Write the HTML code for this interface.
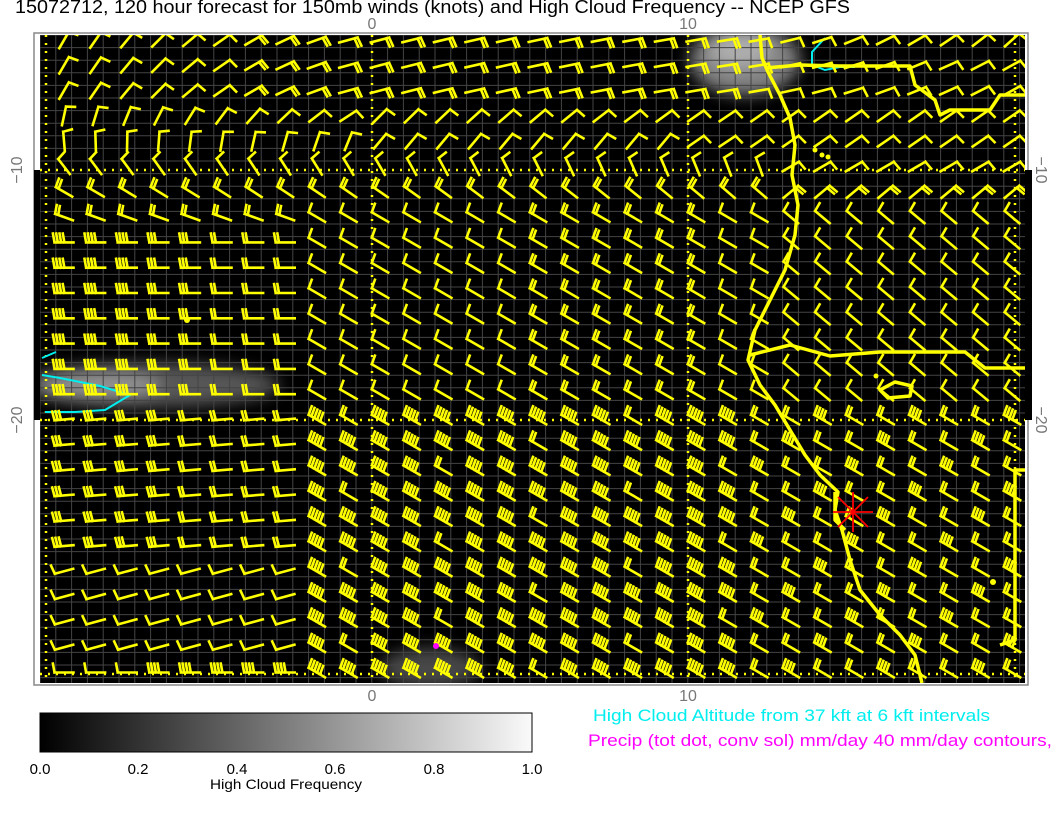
<!DOCTYPE html>
<html><head><meta charset="utf-8"><style>
body{margin:0;width:1056px;height:816px;background:#fff;overflow:hidden;font-family:"Liberation Sans",sans-serif;}
svg{position:absolute;left:0;top:0}
</style></head><body>
<svg id="s" width="1056" height="816" xmlns="http://www.w3.org/2000/svg">
<defs>
<linearGradient id="cb" x1="0" x2="1"><stop offset="0" stop-color="#000"/><stop offset="1" stop-color="#fafafa"/></linearGradient>
<filter id="bl"><feGaussianBlur stdDeviation="8"/></filter>
<clipPath id="pc"><rect x="40" y="35" width="985" height="648"/></clipPath>
</defs>
<text x="15" y="13" font-size="18" fill="#000" textLength="835" lengthAdjust="spacingAndGlyphs">15072712, 120 hour forecast for 150mb winds (knots) and High Cloud Frequency -- NCEP GFS</text>
<text x="372" y="29" font-size="16" fill="#777" text-anchor="middle">0</text>
<text x="688" y="29" font-size="16" fill="#777" text-anchor="middle">10</text>
<text x="372" y="701" font-size="16" fill="#777" text-anchor="middle">0</text>
<text x="688" y="701" font-size="16" fill="#777" text-anchor="middle">10</text>
<text font-size="16" fill="#777" transform="translate(22,170) rotate(-90)" text-anchor="middle">−10</text>
<text font-size="16" fill="#777" transform="translate(22,420) rotate(-90)" text-anchor="middle">−20</text>
<text font-size="16" fill="#777" transform="translate(1036,170) rotate(90)" text-anchor="middle">−10</text>
<text font-size="16" fill="#777" transform="translate(1036,420) rotate(90)" text-anchor="middle">−20</text>
<rect x="34" y="33" width="994" height="652" fill="#fff" stroke="#888" stroke-width="1.5"/>
<rect x="34" y="170" width="6" height="250" fill="#000"/>
<rect x="1025" y="170" width="7" height="250" fill="#000"/>
<rect x="40" y="35" width="985" height="648" fill="#000"/>
<g clip-path="url(#pc)">
<g filter="url(#bl)" opacity="0.85">
<ellipse cx="745" cy="60" rx="55" ry="35" fill="#999"/>
<ellipse cx="740" cy="50" rx="30" ry="18" fill="#ccc"/>
<ellipse cx="150" cy="385" rx="130" ry="22" fill="#666"/>
<ellipse cx="100" cy="385" rx="60" ry="14" fill="#aaa"/>
<ellipse cx="430" cy="668" rx="50" ry="20" fill="#555"/>
</g>
<g id="grid" stroke="#444" stroke-width="1"></g>
<g stroke="#ff0" stroke-width="2.5" stroke-dasharray="2,6">
<line x1="46" y1="35" x2="46" y2="683"/><line x1="372" y1="35" x2="372" y2="683"/><line x1="688" y1="35" x2="688" y2="683"/><line x1="1015" y1="35" x2="1015" y2="683"/>
<line x1="40" y1="170" x2="1025" y2="170"/><line x1="40" y1="420" x2="1025" y2="420"/><line x1="40" y1="674" x2="1025" y2="674"/>
</g>
<g fill="none" stroke="#0ee" stroke-width="2">
<path d="M825 38 L812 52 L812 65 L825 70 L840 67 L855 67"/>
<path d="M42 358 L56 352 M42 375 L60 378 L100 386 L130 395 L105 410 L75 412 L45 412"/>
</g>
<g id="barbs" stroke="#ff0" stroke-width="2.6" fill="none" stroke-linecap="square"></g>
<g fill="none" stroke="#ff0" stroke-width="3.5" stroke-linejoin="round">
<path d="M760 35 L762 58 L768 72 L780 95 L790 118 L795 145 L792 175 L798 205 L795 235 L785 270 L770 300 L755 330 L748 360 L760 385 L775 405 L790 430 L805 455 L820 475 L838 492 L835 510 L842 530 L850 560 L860 590 L880 615 L900 635 L915 655 L922 683"/>
<path d="M765 68 L800 65 L840 66 L910 66 L915 85 L935 100 L940 115 L950 110 L990 110 L1000 95 L1025 95"/>
<path d="M750 355 L790 345 L830 356 L880 352 L965 352 L985 368 L1025 368"/>
<path d="M1025 470 L1015 470 L1015 640 L1000 645"/>
<path d="M880 390 L895 382 L912 386 L910 396 L888 398 Z"/>
<path d="M835 492 L835 520 L845 530"/>
</g>
<g fill="#ff0"><circle cx="815" cy="150" r="2.5"/><circle cx="822" cy="155" r="2.5"/><circle cx="828" cy="157" r="2.5"/><circle cx="187" cy="320" r="3"/><circle cx="993" cy="582" r="3"/><circle cx="876" cy="376" r="2.5"/></g>
<g stroke="#f00" stroke-width="1.8"><line x1="838" y1="497" x2="868" y2="527"/><line x1="838" y1="527" x2="868" y2="497"/><line x1="853" y1="492" x2="853" y2="532"/><line x1="833" y1="512" x2="873" y2="512"/></g>
<circle cx="436" cy="646" r="3" fill="#f0f"/>
</g>
<rect x="40" y="713" width="492" height="39" fill="url(#cb)" stroke="#000"/>
<g font-size="15" fill="#000" text-anchor="middle">
<text x="40" y="774">0.0</text><text x="138" y="774">0.2</text><text x="237" y="774">0.4</text><text x="335" y="774">0.6</text><text x="434" y="774">0.8</text><text x="532" y="774">1.0</text>
<text x="286" y="789" font-size="14" textLength="152" lengthAdjust="spacingAndGlyphs">High Cloud Frequency</text></g>
<text x="593" y="721" font-size="17" fill="#0ee" textLength="397" lengthAdjust="spacingAndGlyphs">High Cloud Altitude from 37 kft at 6 kft intervals</text>
<text x="588" y="746" font-size="17" fill="#f0f" textLength="464" lengthAdjust="spacingAndGlyphs">Precip (tot dot, conv sol) mm/day 40 mm/day contours,</text>
</svg>
<script>
var NS="http://www.w3.org/2000/svg";
function el(p,t,a){var e=document.createElementNS(NS,t);for(var k in a)e.setAttribute(k,a[k]);p.appendChild(e);return e;}
var g=document.getElementById("grid");
for(var x=40;x<1025;x+=15.8)el(g,"line",{x1:x,y1:35,x2:x,y2:683});
for(var y=35;y<683;y+=12.6)el(g,"line",{x1:40,y1:y,x2:1025,y2:y});
var b=document.getElementById("barbs");
function barb(cx,cy,ang,n){
 var a=ang*Math.PI/180,L=19,dx=Math.cos(a),dy=Math.sin(a);
 var x=cx-dx*L/2,y=cy-dy*L/2;
 var ex=x+dx*L,ey=y+dy*L;
 var d="M"+x.toFixed(1)+" "+y.toFixed(1)+"L"+ex.toFixed(1)+" "+ey.toFixed(1);
 var fa=(ang+80)*Math.PI/180,fx=Math.cos(fa)*9,fy=Math.sin(fa)*9;
 for(var k=0;k<n;k++){
  var sx=ex-dx*k*3.3,sy=ey-dy*k*3.3;
  d+="M"+sx.toFixed(1)+" "+sy.toFixed(1)+"l"+fx.toFixed(1)+" "+fy.toFixed(1);
 }
 el(b,"path",{d:d});
}
for(var j=0;j<26;j++){
 for(var i=0;i<31;i++){
  var cx=64+31.6*i,cy=40+25.3*j,ang,n=1,t=i/30;
  if(j<3){
   if(i<9)ang=-60+i*5; else if(i<22)ang=-15+(i-9)*0.5; else ang=-10-(i-22)*4*(j==0?1:0.6);
   n=(i>5&&i<22)?2:1;
  } else if(j<5){
   if(i<10)ang=(j==3?-78:-95)+i*3+(j==3?i*2:0); else if(i<22)ang=-45+(i-10)*1; else ang=-35;
   if(j==4&&i>=10&&i<20)ang=-50;
   n=1;
  } else if(j<7){
   ang=j==5?-128+i*0.8:-150+i*0.5; n=j==6?2:1;
   if(i>22)ang=j==5?-30:-40;
  } else if(j<15){
   if(i<8&&j>=8){ang=180;n=Math.max(1,4-Math.floor(i/2.5));}
   else if(i<8){ang=-160;n=2;}
   else if(i<23){ang=-150;n=(i>14&&i<21)?2:1;}
   else {ang=-140;n=1;}
  } else if(i<8){
   if(j<21){ang=175;n=3-Math.floor(i/4);}
   else if(j<25){ang=165;n=1;}
   else {ang=180;n=(i>2)?4:1;}
  } else {
   ang=-150;n=((i*7+j*3)%9==0)?2:5;
   if(i>21)n=((i+j)%3==0)?4:2;
  }
  barb(cx,cy,ang,n);
 }
}
</script>
</body></html>
